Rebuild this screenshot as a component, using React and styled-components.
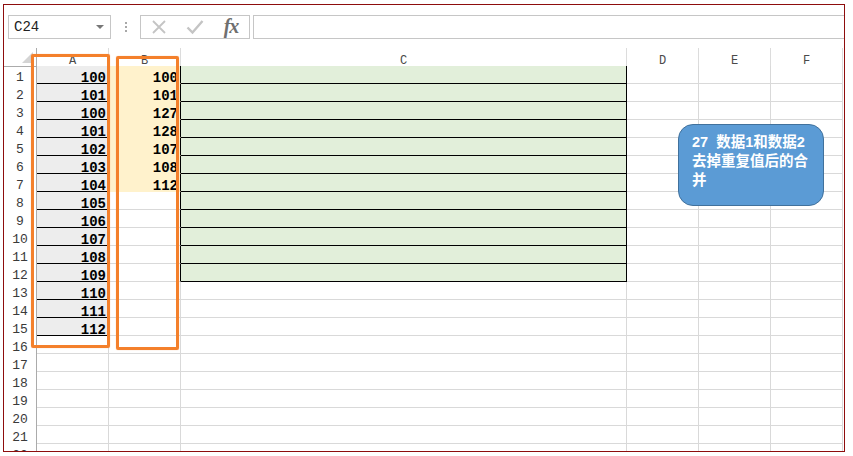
import React from 'react';
import styled, { createGlobalStyle } from 'styled-components';

const GlobalStyle = createGlobalStyle`
	html, body {
		margin: 0;
		padding: 0;
		background: #ffffff;
	}
`;

const GRID = '#d9d9d9';
const INK = '#000000';

const colA = [100, 101, 100, 101, 102, 103, 104, 105, 106, 107, 108, 109, 110, 111, 112];
const colB = [100, 101, 127, 128, 107, 108, 112];
const columns = ['A', 'B', 'C', 'D', 'E', 'F'];
const ROWS = 22;

const Page = styled.div`
	padding: 4px 0 0 3px;
`;

const Frame = styled.div`
	position: relative;
	width: 842px;
	height: 448px;
	box-sizing: border-box;
	border: 1px solid #8e0d0d;
	overflow: hidden;
	background: #ffffff;
`;

const Toolbar = styled.div`
	display: flex;
	align-items: center;
	height: 24px;
	margin: 10px 0 9px 4px;
`;

const NameBox = styled.div`
	display: flex;
	align-items: center;
	justify-content: space-between;
	width: 103px;
	height: 24px;
	box-sizing: border-box;
	border: 1px solid #c6c6c6;
	padding: 0 6px 0 5px;
	font-family: 'Liberation Mono', monospace;
	font-size: 14px;
	color: #222;
`;

const Caret = styled.span`
	width: 0;
	height: 0;
	border-left: 4px solid transparent;
	border-right: 4px solid transparent;
	border-top: 4px solid #777;
`;

const Grip = styled.div`
	width: 29px;
	display: flex;
	flex-direction: column;
	align-items: center;
	gap: 2px;

	span {
		width: 2px;
		height: 2px;
		background: #a8a8a8;
	}
`;

const ButtonGroup = styled.div`
	display: flex;
	align-items: center;
	width: 110px;
	height: 24px;
	box-sizing: border-box;
	border: 1px solid #c6c6c6;
	padding-left: 7px;
`;

const IconSlot = styled.span`
	display: flex;
	align-items: center;
	justify-content: center;
	width: ${p => p.$w}px;
`;

const Fx = styled.span`
	font-family: 'Liberation Serif', serif;
	font-style: italic;
	font-weight: bold;
	font-size: 20px;
	color: #6f6f6f;
	letter-spacing: -1px;
	margin-top: -2px;
`;

const FormulaInput = styled.div`
	flex: 1;
	height: 24px;
	margin-left: 3px;
	box-sizing: border-box;
	border: 1px solid #c6c6c6;
	border-right: none;
`;

const Sheet = styled.div`
	display: grid;
	grid-template-columns: 33px 72px 72px 446px 72px 72px 72px;
	grid-auto-rows: 18px;
	width: 839px;

	& > :nth-child(-n + 7) {
		height: 19px;
	}
`;

const Corner = styled.div`
	position: relative;
	box-sizing: border-box;
	border-right: 1px solid #ababab;
	border-bottom: 1px solid #ababab;

	&::after {
		content: '';
		position: absolute;
		right: 3px;
		bottom: 3px;
		width: 0;
		height: 0;
		border-left: 11px solid transparent;
		border-bottom: 11px solid #d4d4d4;
	}
`;

const ColHead = styled.div`
	box-sizing: border-box;
	border-bottom: 1px solid #ababab;
	border-right: 1px solid #dcdcdc;
	display: flex;
	align-items: center;
	justify-content: center;
	font-family: 'Liberation Mono', monospace;
	font-size: 12px;
	color: #4a4a4a;
	padding-top: 8px;
`;

const RowHead = styled.div`
	box-sizing: border-box;
	border-right: 1px solid #ababab;
	display: flex;
	align-items: center;
	justify-content: center;
	font-family: 'Liberation Mono', monospace;
	font-size: 13px;
	color: #3a3a3a;
	padding-top: 5px;
`;

const Cell = styled.div`
	box-sizing: border-box;
	background: ${p => p.$bg || '#ffffff'};
	border-bottom: 1px solid ${p => p.$bottom || GRID};
	border-right: 1px solid ${p => p.$right || GRID};
	display: flex;
	align-items: center;
	justify-content: flex-end;
	padding: 6px 2px 0 0;
	font-family: 'Liberation Mono', monospace;
	font-weight: bold;
	font-size: 14px;
	color: #000;
`;

const Marker = styled.div`
	position: absolute;
	left: ${p => p.$left}px;
	top: ${p => p.$top}px;
	width: ${p => p.$width}px;
	height: ${p => p.$height}px;
	box-sizing: border-box;
	border: 3px solid #f4802b;
	border-radius: 2px;
	box-shadow: 0 0 1px rgba(244, 128, 43, 0.6);
`;

const Callout = styled.div`
	position: absolute;
	left: 674px;
	top: 119px;
	width: 146px;
	height: 82px;
	box-sizing: border-box;
	background: #5b9bd5;
	border: 1px solid #41719c;
	border-radius: 15px;
	padding: 8px 0 0 13px;
	font-family: 'Liberation Sans', 'Noto Sans CJK SC', sans-serif;
	font-weight: bold;
	font-size: 14.5px;
	line-height: 19px;
	color: #ffffff;
	white-space: pre;
`;

function cellProps(col, row) {
	if (col === 'A' && row <= 15) return { $bg: '#ededed', $bottom: INK };
	if (col === 'B' && row <= 7) return { $bg: '#fff2cc', $bottom: '#fff2cc', $right: INK };
	if (col === 'B' && row <= 12) return { $right: INK };
	if (col === 'C' && row <= 12) return { $bg: '#e2efda', $bottom: INK, $right: INK };
	return {};
}

function cellValue(col, row) {
	if (col === 'A') return colA[row - 1];
	if (col === 'B') return colB[row - 1];
	return null;
}

function CrossIcon() {
	return <svg width="16" height="16" viewBox="0 0 16 16">
		<path d="M2 2 L14 14 M14 2 L2 14" stroke="#c4c4c4" strokeWidth="1.8" fill="none" />
	</svg>;
}

function CheckIcon() {
	return <svg width="18" height="16" viewBox="0 0 18 16">
		<path d="M1.5 8.5 L6.5 13.5 L16.5 2" stroke="#c4c4c4" strokeWidth="2.4" fill="none" />
	</svg>;
}

export default function App() {
	const rows = [];
	for (let r = 1; r <= ROWS; r++) {
		rows.push(<RowHead key={'h' + r}>{r}</RowHead>);
		columns.forEach(col => {
			rows.push(
				<Cell key={col + r} {...cellProps(col, r)}>{cellValue(col, r)}</Cell>
			);
		});
	}

	return <Page>
		<GlobalStyle />
		<Frame>
			<Toolbar>
				<NameBox>C24<Caret /></NameBox>
				<Grip><span /><span /><span /></Grip>
				<ButtonGroup>
					<IconSlot $w={22}><CrossIcon /></IconSlot>
					<IconSlot $w={50}><CheckIcon /></IconSlot>
					<IconSlot $w={22}><Fx>fx</Fx></IconSlot>
				</ButtonGroup>
				<FormulaInput />
			</Toolbar>
			<Sheet>
				<Corner />
				{columns.map(c => <ColHead key={c}>{c}</ColHead>)}
				{rows}
			</Sheet>
			<Marker $left={27} $top={49} $width={79} $height={294} />
			<Marker $left={112} $top={51} $width={63} $height={294} />
			<Callout>{'27  数据1和数据2\n去掉重复值后的合\n并'}</Callout>
		</Frame>
	</Page>;
}
